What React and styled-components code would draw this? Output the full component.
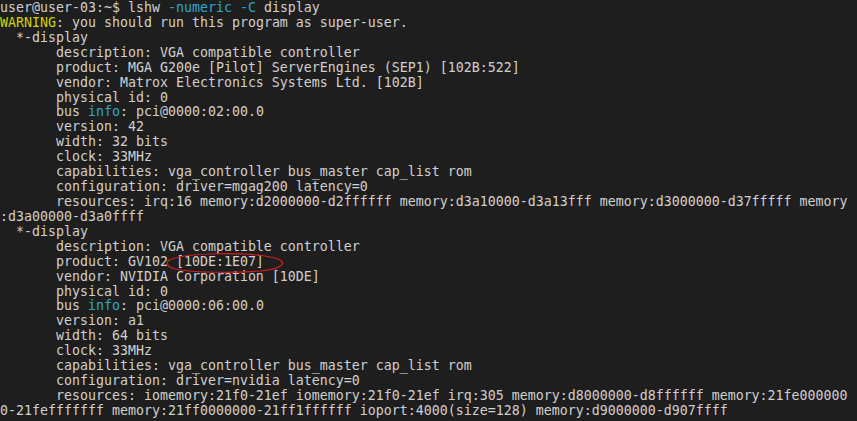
import React from "react";
import styled, { createGlobalStyle } from "styled-components";

const Global = createGlobalStyle`
  html, body { margin: 0; padding: 0; background: #1e1e1e; }
  body { width: 857px; height: 421px; overflow: hidden; }
`;

const Terminal = styled.div`
  position: relative;
  width: 857px;
  height: 421px;
  background: #1e1e1e;
  color: #d0d0d0;
  font-family: "DejaVu Sans Mono", "Liberation Mono", monospace;
  font-size: 13.29px;
  line-height: 14.93px;
  padding-top: 1px;
  box-sizing: border-box;
  overflow: hidden;
`;

const Line = styled.div`
  white-space: pre;
  height: 14.93px;
`;

const Tok = styled.span`
  color: ${(p) => (p.$c === "warn" ? "#d2d200" : p.$c === "cyan" ? "#2ea6cf" : "inherit")};
`;

const Circle = styled.svg`
  position: absolute;
  left: 165px;
  top: 252px;
  overflow: visible;
`;

const lines = [
  [["user@user-03:~$ lshw "], ["-numeric -C", "cyan"], [" display"]],
  [["WARNING", "warn"], [": you should run this program as super-user."]],
  [["  *-display"]],
  [["       description: VGA compatible controller"]],
  [["       product: MGA G200e [Pilot] ServerEngines (SEP1) [102B:522]"]],
  [["       vendor: Matrox Electronics Systems Ltd. [102B]"]],
  [["       physical id: 0"]],
  [["       bus "], ["info", "cyan"], [": pci@0000:02:00.0"]],
  [["       version: 42"]],
  [["       width: 32 bits"]],
  [["       clock: 33MHz"]],
  [["       capabilities: vga_controller bus_master cap_list rom"]],
  [["       configuration: driver=mgag200 latency=0"]],
  [["       resources: irq:16 memory:d2000000-d2ffffff memory:d3a10000-d3a13fff memory:d3000000-d37fffff memory"]],
  [[":d3a00000-d3a0ffff"]],
  [["  *-display"]],
  [["       description: VGA compatible controller"]],
  [["       product: GV102 [10DE:1E07]"]],
  [["       vendor: NVIDIA Corporation [10DE]"]],
  [["       physical id: 0"]],
  [["       bus "], ["info", "cyan"], [": pci@0000:06:00.0"]],
  [["       version: a1"]],
  [["       width: 64 bits"]],
  [["       clock: 33MHz"]],
  [["       capabilities: vga_controller bus_master cap_list rom"]],
  [["       configuration: driver=nvidia latency=0"]],
  [["       resources: iomemory:21f0-21ef iomemory:21f0-21ef irq:305 memory:d8000000-d8ffffff memory:21fe000000"]],
  [["0-21fefffffff memory:21ff0000000-21ff1ffffff ioport:4000(size=128) memory:d9000000-d907ffff"]],
];

export default function App() {
  return (
    <>
      <Global />
      <Terminal>
        {lines.map((segs, i) => (
          <Line key={i}>
            {segs.map(([t, c], j) => (
              <Tok key={j} $c={c}>
                {t}
              </Tok>
            ))}
          </Line>
        ))}
        <Circle width="122" height="22" viewBox="0 0 122 22">
          <path
            d="M4 8 C 20 1, 80 -1, 110 6 C 124 10, 118 17, 95 19 C 70 21, 30 21, 10 17 C 2 15, 1 11, 4 8 Z"
            fill="none"
            stroke="#d21e1e"
            strokeWidth="1.2"
          />
        </Circle>
      </Terminal>
    </>
  );
}
